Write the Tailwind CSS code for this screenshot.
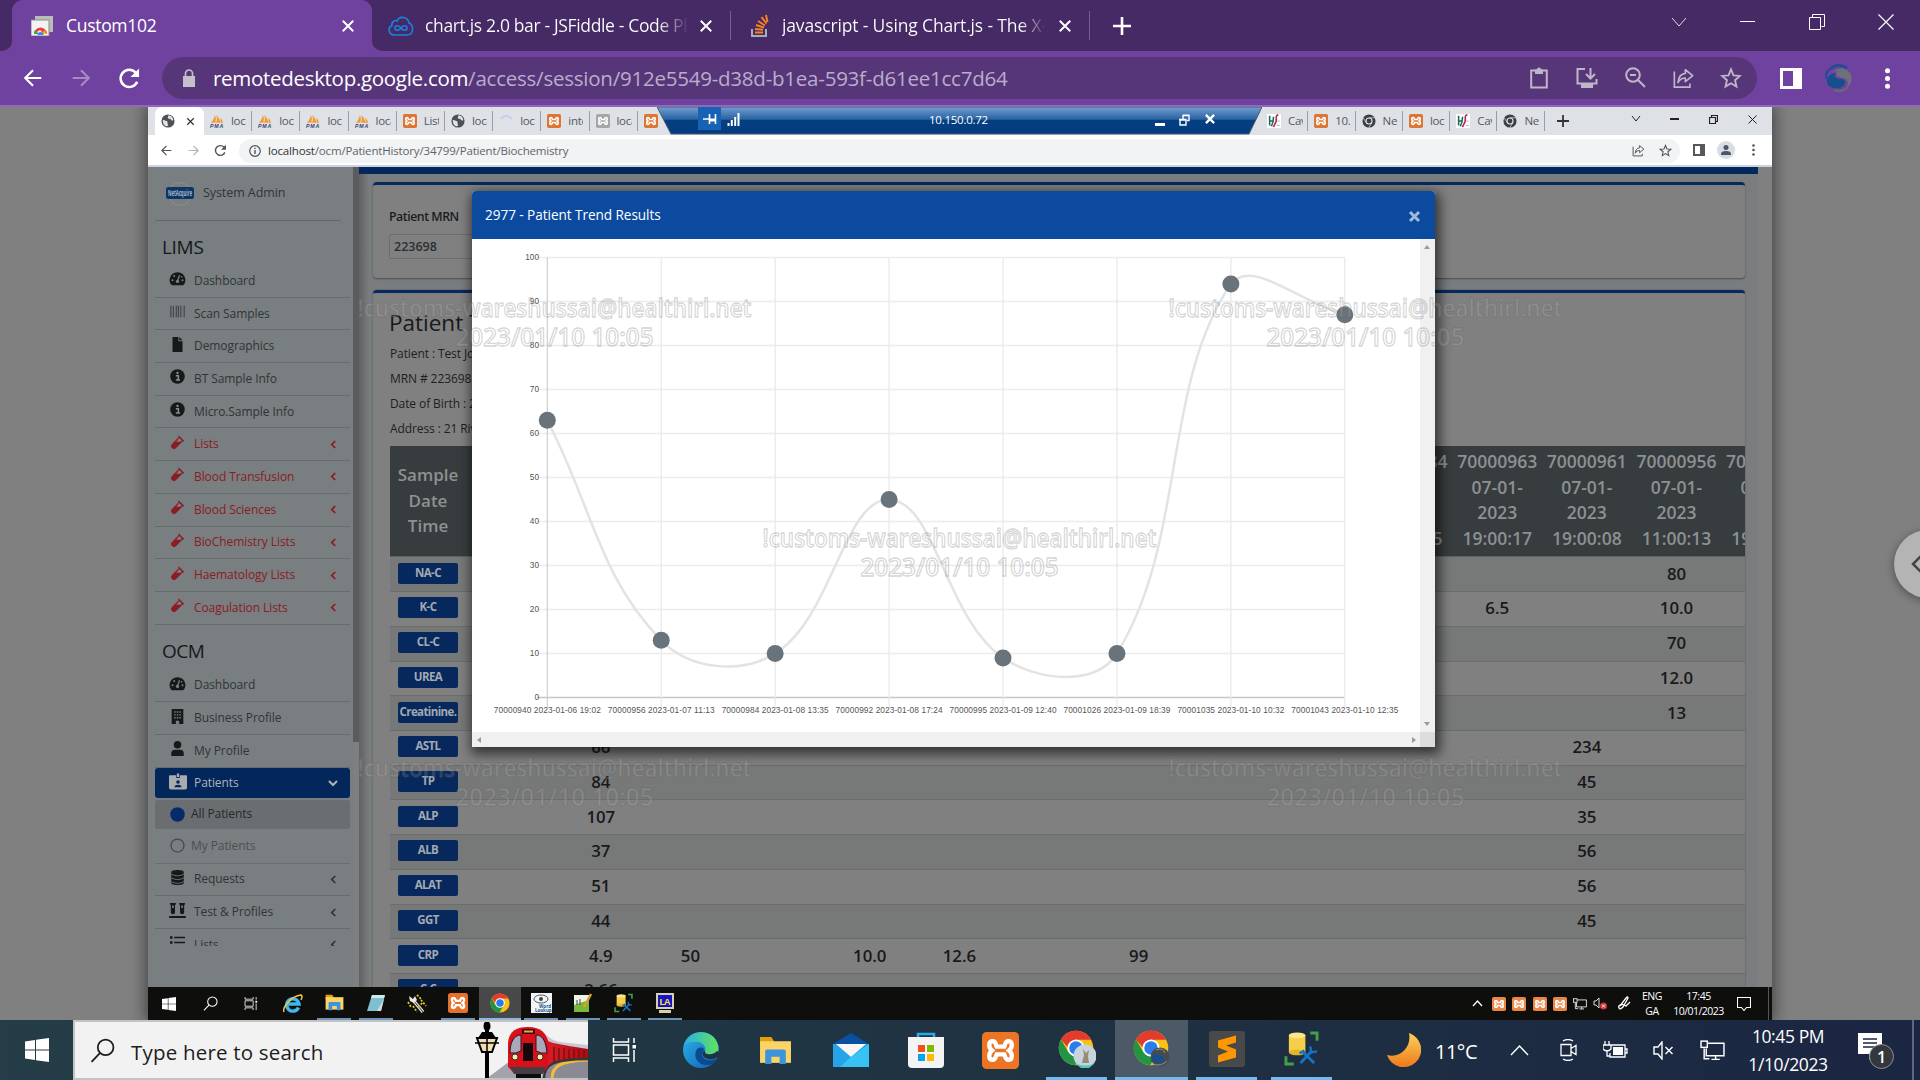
<!DOCTYPE html>
<html lang="en">
<head>
<meta charset="utf-8">
<title>Custom102</title>
<script src="https://cdn.jsdelivr.net/npm/@tailwindcss/browser@4"></script>
</head>
<body class="w-[1920px] h-[1080px] overflow-hidden bg-[#808080] font-['Open_Sans',sans-serif]">
<svg class="absolute w-0 h-0">
  <defs>
    <linearGradient id="gEdge" x1="0" y1="0" x2="1" y2="1"><stop offset="0" stop-color="#2cb4e8"/><stop offset="1" stop-color="#0f5fb5"/></linearGradient>
    <linearGradient id="gEdge2" x1="0" y1="0" x2="1" y2="0"><stop offset="0" stop-color="#27b1e6"/><stop offset="1" stop-color="#62e25c"/></linearGradient>
    <linearGradient id="gMoon" x1="0" y1="0" x2="0" y2="1"><stop offset="0" stop-color="#fbd25a"/><stop offset="1" stop-color="#ee7a1b"/></linearGradient>
    <linearGradient id="gCurve" x1="0" y1="0" x2="1" y2="0"><stop offset="0" stop-color="#e8232c"/><stop offset="1" stop-color="#a60d14"/></linearGradient>
  </defs>
  <symbol id="close" viewBox="0 0 24 24"><path d="M5 5l14 14M19 5L5 19" stroke="currentColor" stroke-width="2.6" fill="none"/></symbol>
  <symbol id="back" viewBox="0 0 24 24"><path d="M21 12H4M12 3.5L3.5 12l8.500 8.500" stroke="currentColor" stroke-width="2.300" fill="none"/></symbol>
  <symbol id="fwd" viewBox="0 0 24 24"><path d="M3 12h17M12 3.500l8.500 8.500-8.500 8.500" stroke="currentColor" stroke-width="2.300" fill="none"/></symbol>
  <symbol id="reload" viewBox="0 0 24 24"><path d="M20 15.500A9 9 0 1 1 18.500 6" stroke="currentColor" stroke-width="2.600" fill="none"/><path d="M22 1.500v9h-9z" fill="currentColor"/></symbol>
  <symbol id="star" viewBox="0 0 24 24"><path d="M12 2.500l2.700 6.600 7.100.6-5.400 4.700 1.600 7-6-3.700-6 3.700 1.600-7-5.400-4.700 7.100-.6z" stroke="currentColor" stroke-width="2" fill="none"/></symbol>
  <symbol id="share" viewBox="0 0 24 24"><path d="M2 5v17h17v-4" stroke="currentColor" stroke-width="1.800" fill="none"/><path d="M14 3l8 6.500-8 6.500v-4c-4 0-6 1.500-8 5 .5-6 3-9.500 8-10z" stroke="currentColor" stroke-width="1.800" fill="none" stroke-linejoin="round"/></symbol>
  <symbol id="globe" viewBox="0 0 16 16"><circle cx="8" cy="8" r="7.500" fill="#4d5156"/><path d="M2 7c2-1 3 1 4.500 1S7 11 8 12s-1 2-1 2C4 14 2 11 2 7zM8 2c3-1 6 2 6 5-1 1-3 0-3-1s-2 0-3-1 1-2 0-3z" fill="#dfe3e6"/></symbol>
  <symbol id="pma" viewBox="0 0 16 16"><path d="M1 10C3 8 5 5 5.500 1 7 4 7 8 6 10zM7 10c1-3 1-6 .5-9C10 4 12 8 12 10zM12 10c.5-2 .3-4-.3-6 1.500 1.500 3 4 3.300 6z" fill="#f29a2e"/><text x="0" y="15.800" font-size="6" font-weight="700" font-style="italic" fill="#3b4276" font-family="Liberation Sans" textLength="15">PMA</text></symbol>
  <symbol id="xampp" viewBox="0 0 24 24"><rect width="24" height="24" rx="3" fill="currentColor"/><path d="M7 6c-3 0-3 4-.5 6-2.500 2-2.500 6 .5 6 2 0 2-2.500 2.500-3.500h5c.5 1 .5 3.500 2.500 3.500 3 0 3-4 .5-6 2.500-2 2.500-6-.5-6-2 0-2 2.500-2.500 3.500h-5C9 8.500 9 6 7 6z" stroke="#fff" stroke-width="2.800" fill="none"/></symbol>
  <symbol id="chromeg" viewBox="0 0 16 16"><circle cx="8" cy="8" r="7.500" fill="#3c4043"/><circle cx="8" cy="8" r="3.400" fill="#3c4043" stroke="#dfe3e6" stroke-width="1.300"/><path d="M8 4.300h7M4.800 10L1.400 4.300M11.200 10l-3.400 5.600" stroke="#dfe3e6" stroke-width=".8"/></symbol>
  <symbol id="chrome" viewBox="0 0 48 48"><circle cx="24" cy="24" r="23" fill="#fbc116"/><path d="M4 12.500A23 23 0 0 0 23 47l10.500-18L24 34l-10-4z" fill="#229443"/><path d="M4 12.500A23 23 0 0 1 24 1a23 23 0 0 1 20 12H24l-9.500 12z" fill="#e33b2e"/><circle cx="24" cy="24" r="11.500" fill="#fff"/><circle cx="24" cy="24" r="9" fill="#2a7de8"/></symbol>
  <symbol id="hse" viewBox="0 0 16 16"><rect width="16" height="16" fill="#fff"/><path d="M3 2v11M3 8h4M7.500 3c0 3-1 8-2.500 11" stroke="#1f6a5c" stroke-width="1.800" fill="none"/><path d="M13 1c-3.500 0-2 4-2.500 7S8 12 7.500 15" stroke="#b7244c" stroke-width="1.800" fill="none"/><path d="M12 8h2.500M11 13h3.500" stroke="#99aab5"/></symbol>
  <symbol id="win" viewBox="0 0 24 24"><path d="M0 3.400L10 2v9.500H0zM11 1.850L24 0v11.500H11zM0 12.500h10V22L0 20.600zM11 12.500h13V24l-13-1.850z" fill="#fff"/></symbol>
  <symbol id="mag" viewBox="0 0 24 24"><circle cx="15" cy="9" r="7.500" fill="none" stroke="currentColor" stroke-width="1.700"/><path d="M9.500 14.500L1.500 23" stroke="currentColor" stroke-width="1.700"/></symbol>
  <symbol id="tview" viewBox="0 0 24 24"><path d="M1 0v4h15V0M1 24v-4h15v4M1 7h15v10H1zM21.500 0v5M21.500 12v12" fill="none" stroke="#fff" stroke-width="1.500"/><rect x="20" y="7" width="3.500" height="3.500" fill="#fff"/></symbol>
  <symbol id="folder" viewBox="0 0 32 32"><path d="M1 3h11l2 3v4H1z" fill="#e3a008"/><path d="M1 7h30v21H1z" fill="#fbd366"/><path d="M6 29V17q0-2 2-2h16q2 0 2 2v12h-6v-7h-8v7z" fill="#3a95dd"/></symbol>
  <symbol id="dbt" viewBox="0 0 36 36"><path d="M5 4h17v18H5z" fill="#f6cf4a"/><ellipse cx="13.500" cy="4.500" rx="8.500" ry="3" fill="#fde58c"/><ellipse cx="13.500" cy="22" rx="8.500" ry="3" fill="#e7b52c"/><path d="M27 2h7v8M2 26v8h8" stroke="#43a047" stroke-width="3" fill="none"/><path d="M17 33l12-13M19 21l12 12" stroke="#1673c4" stroke-width="3"/><path d="M27 16l1 6 6-1M16 23l5-3" stroke="#1673c4" stroke-width="2.500" fill="none"/></symbol>
  <symbol id="net" viewBox="0 0 24 20"><path d="M7 3h16v12H6V8M11 18.500h8M15 15v3.500M4 8v10h5" fill="none" stroke="currentColor" stroke-width="1.400"/><rect x="1" y="1" width="6" height="6" fill="none" stroke="currentColor" stroke-width="1.400"/></symbol>
  <symbol id="dash" viewBox="0 0 20 18"><path d="M2 16a9.500 9.500 0 1 1 16 0q-.5 1-1.500 1h-13Q2.500 17 2 16z" fill="currentColor"/><path d="M10 12l2.500-7" stroke="#797e80" stroke-width="1.600"/><g fill="#797e80"><circle cx="10" cy="12.500" r="2"/><circle cx="4" cy="11" r="1.200"/><circle cx="6" cy="6" r="1.200"/><circle cx="16" cy="11" r="1.200"/><circle cx="15" cy="7" r="1"/></g></symbol>
  <symbol id="barcode" viewBox="0 0 20 18"><path d="M2 2v14M5 2v14M8.500 2v14M11 2v14M14 2v14M18 2v14" stroke="#3d4143" stroke-width="1.300"/></symbol>
  <symbol id="file" viewBox="0 0 20 18"><path d="M4 0h7v5h5v13H4zM12 0l4 4h-4z" fill="currentColor"/></symbol>
  <symbol id="info" viewBox="0 0 20 18"><circle cx="10" cy="9" r="8.700" fill="currentColor"/><path d="M8 8h3v5M8 13.300h5" stroke="#8a8f91" stroke-width="1.800" fill="none"/><circle cx="10" cy="4.800" r="1.400" fill="#8a8f91"/></symbol>
  <symbol id="vial" viewBox="0 0 20 18"><path d="M11.500.5l6.500 6.500-1 1-.6-.6-8 8.300a3.400 3.400 0 0 1-5-5L11.500 2.500 10.600 1.500z" fill="currentColor"/><path d="M8.500 8h5l1.600-1.600L11.900 3.600z" fill="#797e80"/></symbol>
  <symbol id="bldg" viewBox="0 0 20 18"><path d="M3 0h14v18h-5v-4H8v4H3z" fill="currentColor"/><path d="M6 3.500h8M6 7h8M6 10.500h8" stroke="#797e80" stroke-width="1.700" stroke-dasharray="1.800 1.300"/></symbol>
  <symbol id="user" viewBox="0 0 20 18"><circle cx="10" cy="4.500" r="4.500" fill="currentColor"/><path d="M2.500 18v-3q0-4.500 4.500-4.500h6q4.500 0 4.500 4.500v3z" fill="currentColor"/></symbol>
  <symbol id="idb" viewBox="0 0 20 18"><path d="M0 3q0-1 1-1h7v3h4V2h7q1 0 1 1v13q0 2-2 2H2q-2 0-2-2zM8.700 0h2.600v4H8.700z" fill="#a9acae"/><circle cx="10" cy="9.500" r="2" fill="#03275a"/><path d="M6 15.500q0-3 4-3t4 3z" fill="#03275a"/></symbol>
  <symbol id="dot" viewBox="0 0 20 18"><circle cx="10" cy="9" r="8.700" fill="#062b68"/></symbol>
  <symbol id="ring" viewBox="0 0 20 18"><circle cx="10" cy="9" r="7.800" fill="none" stroke="#45494b" stroke-width="1.500"/></symbol>
  <symbol id="db" viewBox="0 0 20 18"><path d="M2.500 2.500C2.500-.7 17.500-.7 17.500 2.500v13c0 3.300-15 3.300-15 0z" fill="currentColor"/><path d="M2.500 5q7.500 4 15 0M2.500 9.500q7.500 4 15 0M2.500 14q7.500 4 15 0" stroke="#797e80" stroke-width="1" fill="none"/></symbol>
  <symbol id="vials" viewBox="0 0 20 18"><path d="M1 0h7v2H7v9a2.500 2.500 0 0 1-5 0V2H1zM12 0h7v2h-1v9a2.500 2.500 0 0 1-5 0V2h-1zM0 15.500h20V18H0z" fill="currentColor"/><path d="M3.500 3h2v3h-2zM14.500 3h2v3h-2z" fill="#797e80"/></symbol>
  <symbol id="list" viewBox="0 0 20 18"><path d="M6 3h13M6 9h13M6 15h13" stroke="currentColor" stroke-width="1.900"/><path d="M1 3h3M1 9h3M1 15h3" stroke="currentColor" stroke-width="3"/></symbol>
  <symbol id="chl" viewBox="0 0 8 10"><path d="M6 1L2 5l4 4" stroke="currentColor" stroke-width="2" fill="none"/></symbol>
</svg>

<div class="relative flex flex-col w-[1920px] h-[1080px]">
  <!-- browser tab strip -->
  <div class="h-[51px] bg-[#462a65] flex text-white text-[17.5px] tracking-[-0.2px]">
    <div class="w-3 bg-[#6f42a0]"><div class="h-full bg-[#462a65] rounded-br-[10px]"></div></div>
    <div class="w-[360px] h-full bg-[#6f42a0] rounded-t-[11px] flex items-center pl-[19px] pr-[15px]">
      <svg class="w-[22px] h-[20px]" viewBox="0 0 22 20"><path d="M4 0h18v16h-4V4H4z" fill="#b9bdb5"/><path d="M0 4h18v16H0z" fill="#f2f2f2" stroke="#8c8c8c"/><path d="M3 18a6.500 6.500 0 0 1 13 0h-3L9 14z" fill="#ea4335"/><path d="M3 18a6 6 0 0 1 1-4l4 4z" fill="#34a853"/><path d="M12 18l1-4 3 4z" fill="#fbbc05"/><path d="M6.500 19a3 3 0 0 1 6 0z" fill="#4285f4"/></svg>
      <span class="ml-[13px] flex-1 -mt-px tracking-[-0.3px]">Custom102</span>
      <svg class="w-[18px] h-[18px]"><use href="#close"/></svg>
    </div>
    <div class="w-[12px] bg-[#6f42a0]"><div class="h-full bg-[#462a65] rounded-bl-[10px]"></div></div>
    <div class="w-[346px] flex items-center pl-[4px]">
      <svg class="w-[26px] h-[20px]" viewBox="0 0 26 20" fill="none" stroke="#1a83dd" stroke-width="1.600"><path d="M6 19a5 5 0 0 1-2-9.500C3 5 8 4 9 5c3-6 11-4 12 2 5 2 5 12-2 12z"/><path d="M13 12c-2-3-6-3-6 0s4 3 6 0 6-3 6 0-4 3-6 0z"/></svg>
      <span class="ml-[11px] w-[264px] overflow-hidden whitespace-nowrap -mt-px bg-linear-to-r from-white from-88% to-transparent bg-clip-text text-transparent tracking-[-0.35px]">chart.js 2.0 bar - JSFiddle - Code Playground</span>
      <svg class="w-[18px] h-[18px] ml-[8px]"><use href="#close"/></svg>
    </div>
    <div class="w-[359px] flex items-center relative">
      <div class="w-px h-[29px] bg-[#765f90]"></div>
      <svg class="w-[18px] h-[24px] ml-[20px]" viewBox="0 0 18 24"><path d="M1 15v7h14v-7" fill="none" stroke="#a9aeb3" stroke-width="2"/><path d="M4 18.500h8M4 15l8 .8M5 11l8 2.500M7 7l7 4.500M10.500 3l5 6.500M15 1l1.500 7" stroke="#f48024" stroke-width="2"/></svg>
      <span class="ml-[13px] w-[264px] overflow-hidden whitespace-nowrap -mt-px bg-linear-to-r from-white from-90% to-transparent bg-clip-text text-transparent tracking-[-0.15px]">javascript - Using Chart.js - The X-axis</span>
      <svg class="w-[18px] h-[18px] ml-[10px]"><use href="#close"/></svg>
    </div>
    <div class="w-[60px] flex items-center">
      <div class="w-px h-[29px] bg-[#765f90]"></div>
      <svg class="w-[18px] h-[18px] ml-[23px]" viewBox="0 0 18 18"><path d="M9 0v18M0 9h18" stroke="#fff" stroke-width="2.600"/></svg>
    </div>
    <div class="ml-auto h-[43px] flex">
      <div class="w-[68px] flex items-center justify-center"><svg class="w-[16px] h-[10px]" viewBox="0 0 16 10"><path d="M1 1l7 8 7-8" stroke="#ddd" fill="none"/></svg></div>
      <div class="w-[69px] flex items-center justify-center"><div class="w-[15px] h-px bg-white"></div></div>
      <div class="w-[69px] flex items-center justify-center"><svg class="w-[16px] h-[16px]" viewBox="0 0 16 16"><path d="M.5 3.500h11v12H.5zM3.500 3V.5h12v12h-3" stroke="#fff" fill="none"/></svg></div>
      <div class="w-[69px] flex items-center justify-center"><svg class="w-[16px] h-[16px]" viewBox="0 0 16 16"><path d="M.5.5l15 15M15.500.5l-15 15" stroke="#fff" stroke-width="1.200"/></svg></div>
    </div>
  </div>

  <!-- browser address bar -->
  <div class="h-[56px] bg-[#6f42a0] border-b-2 border-[#8f68bb] flex items-center pl-[9px] text-white">
    <div class="w-12 flex justify-center"><svg class="w-[22px] h-[22px]"><use href="#back"/></svg></div>
    <div class="w-12 flex justify-center text-[#a78ac6]"><svg class="w-[22px] h-[22px]"><use href="#fwd"/></svg></div>
    <div class="w-12 flex justify-center"><svg class="w-[23px] h-[23px]"><use href="#reload"/></svg></div>
    <div class="ml-[9px] w-[1595px] h-[42px] rounded-full bg-[#563679] flex items-center pl-[20px] text-[#c0b6ca]">
      <svg class="w-[14px] h-[18px]" viewBox="0 0 14 18"><path d="M1 7h12v11H1z" fill="#c4bfca"/><path d="M3.500 8V4.500a3.500 3.500 0 0 1 7 0V8" stroke="#c4bfca" stroke-width="1.700" fill="none"/></svg>
      <span class="ml-[17px] text-[20.500px] whitespace-nowrap tracking-[-0.23px] text-[#bcaccb]"><span class="text-white tracking-[-0.3px]">remotedesktop.google.com</span>/access/session/912e5549-d38d-b1ea-593f-d61ee1cc7d64</span>
      <div class="ml-auto mr-[2px] flex">
        <div class="w-12 flex justify-center"><svg class="w-[18px] h-[22px]" viewBox="0 0 18 22"><path d="M1.200 3.500h15.600v17H1.200z" fill="none" stroke="currentColor" stroke-width="2"/><path d="M5 2.500h2a2 2 0 0 1 4 0h2V7H5z" fill="currentColor"/></svg></div>
        <div class="w-12 flex justify-center"><svg class="w-[22px] h-[22px]" viewBox="0 0 22 22"><path d="M9 2H1.500v14.500h19V12" fill="none" stroke="currentColor" stroke-width="2"/><path d="M14.500 1v9M10 7l4.500 4.500L19 7" stroke="currentColor" stroke-width="2" fill="none"/><path d="M5 17h12v4H5z" fill="currentColor"/></svg></div>
        <div class="w-12 flex justify-center"><svg class="w-[21px] h-[21px]" viewBox="0 0 21 21"><circle cx="8" cy="8" r="6.800" fill="none" stroke="currentColor" stroke-width="2"/><path d="M13 13l7 7M5 8h6" stroke="currentColor" stroke-width="2"/></svg></div>
        <div class="w-12 flex justify-center"><svg class="w-[23px] h-[22px]"><use href="#share"/></svg></div>
        <div class="w-12 flex justify-center"><svg class="w-[22px] h-[22px]"><use href="#star"/></svg></div>
      </div>
    </div>
    <div class="w-12 ml-[10px] flex justify-center"><div class="w-[22px] h-[21px] border-[3px] border-r-[9px] border-white"></div></div>
    <div class="w-12 flex justify-center"><svg class="w-[28px] h-[28px]" viewBox="0 0 28 28" fill="none"><path d="M7 9c4-6 14-6 18 0 4 7 0 13-4 15 3-5 2-9-3-10-7-1-9-4-5-7-3 0-5 1-6 2z" fill="#6d7278"/><path d="M12 9c-6 0-11 4-10 10 3 7 16 7 18 0 0-4-3-4-6-4-5-1-6-4-2-6z" fill="#144f8e"/><path d="M5 5Q13-2 22 4" stroke="#1b4f8f" stroke-width="2.500"/><path d="M1.500 15Q0 8 5 5" stroke="#1b4f8f" stroke-width="2"/><path d="M9 26q8 3 14-3" stroke="#666c74" stroke-width="2"/></svg></div>
    <div class="w-12 flex justify-center"><svg class="w-[5px] h-[21px]" viewBox="0 0 5 21" fill="#fff"><circle cx="2.500" cy="2.700" r="2.500"/><circle cx="2.500" cy="10.500" r="2.500"/><circle cx="2.500" cy="18.300" r="2.500"/></svg></div>
  </div>

  <!-- remote session viewport -->
  <div class="h-[913px] bg-[#808080] flex justify-center overflow-hidden relative">
    <div class="w-[1624px] h-[913px] flex flex-col shadow-[0_0_14px_3px_rgba(0,0,0,0.45)] relative overflow-hidden">
      <!-- inner tab strip -->
      <div class="h-[28px] bg-[#dee1e6] flex items-center text-[11.5px] text-[#55595d] tracking-[-0.3px] relative">
        <div class="ml-[7px] w-[49px] h-full rounded-t-[7px] bg-white flex items-center pl-[6px] gap-[10px] text-[#333]"><svg class="w-[14px] h-[14px]"><use href="#globe"/></svg><svg class="w-[11px] h-[11px]"><use href="#close"/></svg></div>
        <div id="tabsL" class="flex h-full items-center w-[460px] overflow-hidden"></div>
        <div id="tabsR" class="flex h-full items-center ml-[597px]"></div>
        <svg class="w-[12px] h-[12px] ml-[12px] text-[#333]" viewBox="0 0 12 12"><path d="M6 0v12M0 6h12" stroke="currentColor" stroke-width="1.800"/></svg>
        <div class="ml-auto flex text-[#222] -mt-1">
          <div class="w-[39px] flex justify-center"><svg class="w-[10px] h-[7px]" viewBox="0 0 10 7"><path d="M1 1l4 5 4-5" stroke="currentColor" fill="none"/></svg></div>
          <div class="w-[39px] flex justify-center items-center"><div class="w-[9px] h-[1.500px] bg-[#222]"></div></div>
          <div class="w-[39px] flex justify-center"><svg class="w-[9px] h-[9px]" viewBox="0 0 9 9"><path d="M.5 2.500h6v6h-6zM2.500 2V.5h6v6h-2" stroke="currentColor" fill="none" stroke-width="1.200"/></svg></div>
          <div class="w-[39px] flex justify-center"><svg class="w-[9px] h-[9px]" viewBox="0 0 9 9"><path d="M.5.5l8 8M8.500.5l-8 8" stroke="currentColor"/></svg></div>
        </div>
        <!-- connection bar laid over the tabs -->
        <div class="absolute left-[509px] top-0 w-[605px] h-[28px]">
          <svg class="absolute inset-0" width="605" height="28"><defs><linearGradient id="gb" x1="0" y1="0" x2="0" y2="1"><stop offset="0" stop-color="#719fd0"/><stop offset=".45" stop-color="#2a62a3"/><stop offset=".5" stop-color="#03407f"/><stop offset="1" stop-color="#053a83"/></linearGradient></defs><path d="M0 0h605l-13 27H14z" fill="url(#gb)" stroke="#4a5a68"/></svg>
          <div class="relative flex items-center h-[26px] text-white">
            <div class="ml-[41px] w-[23px] h-[23px] -mt-[3px] bg-[#1762b5] flex items-center justify-center"><svg class="w-[14px] h-[10px]" viewBox="0 0 14 10"><path d="M0 5h6M6.500 0v10M12.500 0v10" stroke="#fff" stroke-width="1.600"/><path d="M7 4.500h6v3H7z" fill="#fff"/></svg></div>
            <svg class="ml-[6px] w-[13px] h-[13px] -mt-[2px]" viewBox="0 0 13 13"><path d="M1.500 10v3M4.800 7v6M8.200 4v9M11.500 0v13" stroke="#fff" stroke-width="2"/></svg>
            <span class="ml-[189px] text-[11.500px] tracking-[-0.25px]">10.150.0.72</span>
            <div class="ml-[167px] mt-[8px] w-[10px] h-[3px] bg-white"></div>
            <svg class="ml-[14px] w-[11px] h-[12px] -mt-px" viewBox="0 0 11 12"><path d="M1 6h6v5H1zM4 5V1.500h6v5H8M0 5.500h7.500M4 1.200h6.500" stroke="#fff" stroke-width="1.400" fill="none"/></svg>
            <svg class="ml-[13px] w-[14px] h-[14px] -mt-[2px]" viewBox="0 0 24 24"><path d="M5 5l14 14M19 5L5 19" stroke="#fff" stroke-width="4"/></svg>
          </div>
        </div>
      </div>
      <!-- inner address bar -->
      <div class="h-[32px] bg-white border-b-2 border-[#c9d3e2] flex items-center text-[#50555a]">
        <div class="ml-[5px] w-[27px] flex justify-center"><svg class="w-[13px] h-[13px]"><use href="#back"/></svg></div>
        <div class="w-[27px] flex justify-center text-[#b3b6b8]"><svg class="w-[13px] h-[13px]"><use href="#fwd"/></svg></div>
        <div class="w-[27px] flex justify-center"><svg class="w-[13px] h-[13px]"><use href="#reload"/></svg></div>
        <div class="ml-[5px] w-[1441px] h-[24px] rounded-full bg-[#f1f3f4] flex items-center pl-[10px] pr-[8px] mt-px">
          <svg class="w-[12px] h-[12px]" viewBox="0 0 12 12"><circle cx="6" cy="6" r="5.300" fill="none" stroke="currentColor" stroke-width="1.200"/><path d="M6 5v4M6 2.700v1.400" stroke="currentColor" stroke-width="1.400"/></svg>
          <span class="ml-[7px] text-[11.500px] tracking-[-0.16px] text-[#5f6368]"><span class="text-[#303438]">localhost</span>/ocm/PatientHistory/34799/Patient/Biochemistry</span>
          <svg class="ml-auto w-[13px] h-[13px]"><use href="#share"/></svg>
          <svg class="ml-[14px] w-[13px] h-[13px]"><use href="#star"/></svg>
        </div>
        <div class="ml-[13px] w-[12px] h-[12px] border-2 border-r-[5px] border-[#55595d]"></div>
        <svg class="ml-[12px] w-[18px] h-[18px]" viewBox="0 0 18 18"><circle cx="9" cy="9" r="9" fill="#d9dde3"/><circle cx="9" cy="6.500" r="2.500" fill="#4b5667"/><path d="M4 13q0-3 5-3t5 3v1H4z" fill="#4b5667"/></svg>
        <svg class="ml-[17px] w-[3px] h-[12px]" viewBox="0 0 3 12" fill="#50555a"><circle cx="1.500" cy="1.500" r="1.300"/><circle cx="1.500" cy="6" r="1.300"/><circle cx="1.500" cy="10.500" r="1.300"/></svg>
      </div>

      <!-- web application, dimmed behind the dialog -->
      <div class="h-[820px] flex overflow-hidden bg-[#7a7d7f]">
        <aside class="w-[205px] bg-[#797e80] text-[12px] tracking-[-0.08px] text-[#303537] overflow-hidden">
          <div class="h-[54px] mx-[7px] mr-[12px] border-b border-[#62686b] flex items-center pl-[11px]">
            <svg class="w-[28px] h-[26px]" viewBox="0 0 28 26"><circle cx="14" cy="13" r="11.500" fill="none" stroke="#9a8f8c" stroke-width=".8"/><rect y="6" width="28" height="12" rx="2.500" fill="#0a3768"/><text x="2" y="15.200" font-size="8" font-weight="700" fill="#a9b4c0" textLength="24" lengthAdjust="spacingAndGlyphs">NetAcquire</text></svg>
            <span class="ml-[9px] text-[12.500px]">System Admin</span>
          </div>
          <div class="h-[44px] pl-[14px] flex items-center pt-[8px] text-[19px] text-[#15191b] tracking-[-0.3px]">LIMS</div>
          <div id="lims"></div>
          <div class="h-[45px] pl-[14px] flex items-center pt-[8px] text-[19px] text-[#15191b] tracking-[-0.5px]">OCM</div>
          <div id="ocm"></div>
          <div class="mx-[7px] mr-[3px] h-[30px] rounded-[3px] bg-[#03275a] text-[#aeb4ba] flex items-center pl-[14px]"><svg class="w-[18px] h-[17px] -mt-[3px]"><use href="#idb"/></svg><span class="ml-[7px]">Patients</span><svg class="w-[8px] h-[10px] ml-auto mr-[13px] -rotate-90"><use href="#chl"/></svg></div>
          <div class="mx-[7px] mr-[3px] mt-[2px] h-[29px] rounded-[3px] bg-[#6b6e70] flex items-center pl-[14px] text-[#25292b]"><svg class="w-[17px] h-[15px]"><use href="#dot"/></svg><span class="ml-[5px]">All Patients</span></div>
          <div class="mx-[7px] mr-[3px] h-[35px] border-b border-[#696e71] flex items-center pl-[14px] text-[#4c5053]"><svg class="w-[17px] h-[15px]"><use href="#ring"/></svg><span class="ml-[5px]">My Patients</span></div>
          <div id="tail" class="h-[82px] overflow-hidden"></div>
        </aside>
        <div class="w-[6px] bg-[#7e8080]"><div class="h-[575px] bg-[#5b5c5c]"></div></div>
        <main class="w-[1399px] h-full flex flex-col bg-linear-to-r from-[#5e6263] to-[#7a7d7f] to-[10px]">
          <div class="h-[7px] shrink-0 bg-[#04285b]"></div>
          <section class="mt-[8px] ml-[14px] w-[1372px] h-[96px] shrink-0 rounded-[4px] border-t-[3px] border-[#06295e] bg-[#808080] shadow-[0_1px_2px_rgba(0,0,0,0.4)] pl-[16px] pt-[22px]">
            <div class="text-[12.300px] leading-[20px] font-semibold text-[#1a1d20] tracking-[-0.45px]">Patient MRN</div>
            <div class="mt-[7px] w-[300px] h-[25px] border border-[#6b6e71] rounded-[2px] pl-[4px] text-[12.500px] leading-[23px] font-semibold text-[#2b2f33]">223698</div>
          </section>
          <section class="mt-[12px] ml-[14px] w-[1372px] flex-1 rounded-t-[4px] border-t-[3px] border-[#06295e] bg-[#808080] shadow-[0_0_2px_rgba(0,0,0,0.4)] pl-[17px] overflow-hidden">
            <h1 class="mt-[11px] h-[38px] leading-[38px] text-[22.500px] text-[#17191b] -ml-px">Patient Trend</h1>
            <div class="text-[12px] leading-[25.100px] text-[#1d2023] tracking-[-0.1px] mt-[-1px]">
              <div>Patient : Test Jones</div><div>MRN # 223698</div><div>Date of Birth : 21-03-1980</div><div>Address : 21 River Road</div>
            </div>
            <div class="mt-[5px] h-[111px] w-[1355px] flex overflow-hidden bg-[#373c3e] text-[#8e9192] text-[17.500px] font-semibold leading-[25.500px] text-center border-b border-[#5f6364]">
              <div class="w-[76px] pt-[16px] shrink-0 text-[17px]">Sample Date Time</div><div class="w-[90px] shrink-0"></div>
              <div id="thead" class="flex pt-[3px]"></div>
            </div>
            <div id="tbody"></div>
          </section>
        </main>
        <div class="w-[14px] bg-[#808080]"></div>
      </div>

      <!-- inner taskbar -->
      <div class="h-[33px] bg-[#0e0e0d] flex items-center text-white shrink-0">
        <div class="w-[41.400px] flex justify-center"><svg class="w-[14px] h-[14px]"><use href="#win"/></svg></div>
        <div class="w-[41.400px] flex justify-center"><svg class="w-[15px] h-[15px]"><use href="#mag"/></svg></div>
        <div class="w-[41.400px] flex justify-center"><svg class="w-[14px] h-[13px]"><use href="#tview"/></svg></div>
        <div class="w-[41.400px] flex justify-center"><svg class="w-[20px] h-[20px]" viewBox="0 0 20 20"><path d="M15.500 13.500A6.200 6.200 0 1 1 16 10H5" fill="none" stroke="#3db9ef" stroke-width="3.400"/><path d="M1 18C-1 14 8 2 18 1q2 1 0 5" fill="none" stroke="#f4c443" stroke-width="1.500"/></svg></div>
        <div class="w-[41.400px] h-full flex justify-center items-center"><div class="w-[34px] h-full border-b-2 border-[#6f93b8] flex justify-center items-center"><svg class="w-[19px] h-[19px]"><use href="#folder"/></svg></div></div>
        <div class="w-[41.400px] h-full flex justify-center items-center"><div class="w-[34px] h-full border-b-2 border-[#6f93b8] flex justify-center items-center"><svg class="w-[18px] h-[18px]" viewBox="0 0 18 18"><path d="M5 1h13l-4 16H0z" fill="#7fc0cf"/><path d="M5 1h13l-1 3H4z" fill="#cfe9ee"/><path d="M10 17l7-12-3 12z" fill="#d8dcdf"/></svg></div></div>
        <div class="w-[41.400px] flex justify-center"><svg class="w-[20px] h-[20px]" viewBox="0 0 20 20"><path d="M6 6l10 12" stroke="#d9d9d2" stroke-width="3.500"/><path d="M6 6l10 12" stroke="#333" stroke-width="1"/><path d="M2 2l1 5 4 2 3-3-2-4-2 3z" fill="#e8e8e0"/><path d="M1 8l3 5M10 1l4 4M14 6l5 6M6 12l4 6M15 9l-4 5" stroke="#e4c81e" stroke-width="1.800" stroke-dasharray="2 1.500"/></svg></div>
        <div class="w-[41.400px] h-full flex justify-center items-center"><div class="w-[34px] h-full border-b-2 border-[#6f93b8] flex justify-center items-center text-[#e5722c]"><svg class="w-[20px] h-[20px]"><use href="#xampp"/></svg></div></div>
        <div class="w-[41.400px] h-full flex justify-center items-center bg-[#474847] border-b-2 border-[#8fb5dc]"><svg class="w-[20px] h-[20px]"><use href="#chrome"/></svg></div>
        <div class="w-[41.400px] h-full flex justify-center items-center"><div class="w-[34px] h-full border-b-2 border-[#6f93b8] flex justify-center items-center"><svg class="w-[21px] h-[20px]" viewBox="0 0 21 20"><path d="M0 0h21v20H0z" fill="#f3f6f8"/><ellipse cx="10" cy="6" rx="7" ry="4" fill="none" stroke="#555"/><circle cx="10" cy="6" r="2" fill="#444"/><text x="8" y="14.500" font-size="4.500" font-weight="700" fill="#23568a">Word</text><text x="4" y="19" font-size="4.500" font-weight="700" fill="#23568a">Lookup</text></svg></div></div>
        <div class="w-[41.400px] h-full flex justify-center items-center"><div class="w-[34px] h-full border-b-2 border-[#6f93b8] flex justify-center items-center"><svg class="w-[19px] h-[20px]" viewBox="0 0 19 20"><path d="M1 2h15v17H1z" fill="#eef3ea"/><path d="M1 12l15-5v12H1z" fill="#78b83a"/><path d="M4 7v5M7 6v6" stroke="#444"/><path d="M18 1l-7 13" stroke="#dca12d" stroke-width="2.500"/></svg></div></div>
        <div class="w-[41.400px] h-full flex justify-center items-center"><div class="w-[34px] h-full border-b-2 border-[#6f93b8] flex justify-center items-center"><svg class="w-[19px] h-[20px]"><use href="#dbt"/></svg></div></div>
        <div class="w-[41.400px] h-full flex justify-center items-center"><div class="w-[34px] h-full border-b-2 border-[#6f93b8] flex justify-center items-center"><svg class="w-[20px] h-[20px]" viewBox="0 0 20 20"><path d="M1 0h18v16H1zM4 17h12v3H4z" fill="#d6d0ae"/><path d="M3 2h14v12H3z" fill="#1414c8"/><text x="4.500" y="12" font-size="9.500" font-weight="700" fill="#ffe21a" textLength="11" font-family="Liberation Sans">LA</text></svg></div></div>
        <div class="ml-auto flex items-center h-full">
          <svg class="w-[11px] h-[7px] mr-[9px]" viewBox="0 0 11 7"><path d="M1 6l4.500-5L10 6" stroke="#fff" fill="none" stroke-width="1.300"/></svg>
          <div class="flex gap-[6.300px] text-[#ea8646]"><svg class="w-[14px] h-[14px]"><use href="#xampp"/></svg><svg class="w-[14px] h-[14px]"><use href="#xampp"/></svg><svg class="w-[14px] h-[14px]"><use href="#xampp"/></svg><svg class="w-[14px] h-[14px]"><use href="#xampp"/></svg></div>
          <svg class="ml-[6px] w-[14px] h-[12px]"><use href="#net"/></svg>
          <svg class="ml-[6px] w-[14px] h-[13px]" viewBox="0 0 14 13"><path d="M1 4h2l3-3v10L3 8H1z" fill="none" stroke="#ddd"/><circle cx="10.500" cy="9" r="3.500" fill="#d3303b"/><path d="M9 7.500l3 3M12 7.500l-3 3" stroke="#fff"/></svg>
          <svg class="ml-[10px] w-[14px] h-[15px]" viewBox="0 0 14 15"><path d="M3 10L9 2q2-2 2 0L6 11q-3 3-4 1t1-3q4-1 6 1l4-4" fill="none" stroke="#fff" stroke-width="1.300"/></svg>
          <div class="ml-[10px] w-[22px] text-[10.500px] leading-[15px] text-center tracking-[-0.4px]">ENG<br>GA</div>
          <div class="ml-[10px] w-[51px] text-[10.500px] leading-[15px] text-center tracking-[-0.5px]">17:45<br>10/01/2023</div>
          <svg class="ml-[13px] w-[14px] h-[14px] mr-[17px]" viewBox="0 0 14 14"><path d="M.5.500h13v10h-4l-2.500 3-2.500-3h-4z" fill="none" stroke="#fff" stroke-width="1.100"/></svg>
          <div class="w-px h-full bg-[#555] mr-[3px]"></div>
        </div>
      </div>

      <!-- dialog -->
      <div class="absolute left-[324px] top-[84px] w-[962.500px] h-[556px] bg-white rounded-t-[4px] overflow-hidden shadow-[2px_4px_12px_3px_rgba(0,0,0,0.6)] flex flex-col">
        <div class="h-[48px] bg-[#0b4a9e] flex items-center justify-between pl-[13px] pr-[14px] text-white"><span class="text-[13.600px] tracking-[-0.06px]">2977 - Patient Trend Results</span><svg class="w-[13px] h-[13px] mt-[3px] text-[#9db9dc]" viewBox="0 0 13 13"><path d="M2 2l9 9M11 2l-9 9" stroke="currentColor" stroke-width="3"/></svg></div>
        <div class="flex h-[493px]">
          <svg id="chart" class="w-[948px] h-[493px] shrink-0" viewBox="0 0 948 493" font-family="Liberation Sans" font-size="8.300" fill="#555"></svg>
          <div class="w-[15px] bg-[#f0f0f0] flex flex-col justify-between items-center py-[6px]"><svg class="w-[6px] h-[4px]"><path d="M0 4l3-4 3 4z" fill="#999"/></svg><svg class="w-[6px] h-[4px]"><path d="M0 0l3 4 3-4z" fill="#999"/></svg></div>
        </div>
        <div class="h-[15px] bg-[#f0f0f0] flex justify-between items-center pl-[5px]"><svg class="w-[4px] h-[6px]"><path d="M4 0L0 3l4 3z" fill="#999"/></svg><div class="flex h-full items-center gap-[4px]"><svg class="w-[4px] h-[6px]"><path d="M0 0l4 3-4 3z" fill="#999"/></svg><div class="w-[15px] h-full bg-[#dcdcdc]"></div></div></div>
      </div>

      <!-- session watermark -->
      <svg id="wm" class="absolute left-0 top-0 w-[1624px] h-[880px]" font-family="Open Sans" font-size="24.500" font-weight="600" text-anchor="middle" fill="#fff" fill-opacity=".14" stroke="#606060" stroke-opacity=".27" stroke-width="1.300"></svg>
    </div>
    <!-- session options handle -->
    <div class="absolute left-[1894px] top-[423px] w-[68px] h-[68px] rounded-full bg-[#b4b4b4] shadow-[0_2px_10px_rgba(0,0,0,0.4)] flex items-center pl-[16px]"><svg class="w-[14px] h-[20px]" viewBox="0 0 14 20"><path d="M12 1L3 10l9 9" stroke="#444" stroke-width="2.500" fill="none"/></svg></div>
  </div>

  <!-- host taskbar -->
  <div class="h-[60px] bg-linear-to-r from-[#243d47] via-[#1f3342] to-[#1b2642] flex items-center text-white">
    <div class="w-[73px] shrink-0 flex justify-center"><svg class="w-[24px] h-[24px]"><use href="#win"/></svg></div>
    <div class="w-[515px] shrink-0 h-[60px] bg-[#f2f2f2] border-2 border-[#c3c3c3] border-r-0 flex items-center text-[#1d1d1d] pl-[15px] overflow-hidden">
      <svg class="w-[25px] h-[25px]"><use href="#mag"/></svg>
      <span class="ml-[16px] text-[20.500px] mt-[4px] tracking-[0.2px]">Type here to search</span>
      <svg class="ml-auto w-[116px] h-[58px]" viewBox="0 0 116 58">
        <path d="M14 58L46 34v24z" fill="#a4a2ad"/><path d="M44 46h18v12H44z" fill="#111"/>
        <path d="M52 8C66 2 76 20 88 21l28 3v34H60z" fill="#c9c7d6"/>
        <path d="M62 8C70 22 80 22 116 28v12c-24-1-30 4-44 8z" fill="url(#gCurve)"/>
        <path d="M82 26v17M87 27v14M92 27v13M97 28v12M102 28v11M107 28v11M112 29v10" stroke="#7e0a10" stroke-width="1.300"/>
        <path d="M70 58c2-14 10-19 46-20v20z" fill="#8b8993"/><path d="M80 58c0-12 6-18 36-19" stroke="#f0bd34" stroke-width="3" fill="none"/><path d="M72 58c0-14 8-20 44-20" stroke="#36343c" stroke-width="2.500" fill="none"/>
        <path d="M36 46V22C37 10 44 6 56 6c13 0 19 6 21 18l-1 22q-3 5-8 6H42z" fill="#d9101a"/>
        <path d="M38 32c0-11 4-18 11-18v16q-5 3-11 2zM64 14c7 0 10 7 11 18q-6 1-11-2z" fill="#aaa8bd" stroke="#37101a"/>
        <path d="M51 22h10v18H51z" fill="#14080a"/><path d="M50 8h13v5H50z" fill="#3a0a0a"/><path d="M52 10.500h9" stroke="#f5a33a" stroke-width="2"/>
        <circle cx="43" cy="36" r="3" fill="#ffe9a8" stroke="#333"/><circle cx="68" cy="36" r="3" fill="#ffe9a8" stroke="#333"/>
        <path d="M38 46h36l-3 7H42z" fill="#473c42"/><path d="M44 53h25v5H44z" fill="#0c0c0e"/>
        <path d="M15 0v58" stroke="#000" stroke-width="4"/><ellipse cx="15" cy="5" rx="3.500" ry="4.500" fill="#000"/><path d="M6 17l4-6h10l4 6z" fill="#000"/><path d="M5 17h20l-5 14H10z" fill="#f1dfb0" stroke="#000" stroke-width="2"/><path d="M15 17v14M3 22h24" stroke="#000" stroke-width="1.500"/>
      </svg>
    </div>
    <div class="w-[75px] shrink-0 pr-[2px] flex justify-center"><svg class="w-[25px] h-[24px]"><use href="#tview"/></svg></div>
    <div class="w-[75px] shrink-0 flex justify-center"><svg class="w-[36px] h-[36px]" viewBox="0 0 36 36"><circle cx="18" cy="18" r="18" fill="url(#gEdge)"/><path d="M1 14C4-3 30-5 35 13c3 11-11 14-14 9 3-5 1-11-6-12C8 9 3 11 1 14z" fill="url(#gEdge2)"/><path d="M13 19c-3 8 4 15 12 14 4 0 8-3 8-6-6 3-14 1-14-5 0-2 2-3 2-5-3-3-7-1-8 2z" fill="#0c4a8d"/><path d="M20 20q-2 5 5 7 6 1 9-2l4 2v-6l-4-2q-4 4-10 3-3-1-2-4z" fill="#1f3443"/></svg></div>
    <div class="w-[75px] shrink-0 flex justify-center"><svg class="w-[33px] h-[33px]"><use href="#folder"/></svg></div>
    <div class="w-[75px] shrink-0 flex justify-center"><svg class="w-[36px] h-[34px]" viewBox="0 0 36 34"><path d="M0 11L18 0l18 11z" fill="#0a50a0"/><path d="M0 11h36v23H0z" fill="#27a3ea"/><path d="M3 11h30L18 24z" fill="#f6f6f6"/><path d="M36 11L18 24 7 34h29z" fill="#38c4f2"/></svg></div>
    <div class="w-[75px] shrink-0 flex justify-center"><svg class="w-[36px] h-[36px]" viewBox="0 0 36 36"><path d="M10 7V2h16v5" fill="none" stroke="#2aa8ea" stroke-width="2.500"/><path d="M0 5h36v27q0 4-4 4H4q-4 0-4-4z" fill="#f4f4f4"/><path d="M10 13h7v7h-7z" fill="#f25022"/><path d="M19 13h7v7h-7z" fill="#7fba00"/><path d="M10 22h7v7h-7z" fill="#00a4ef"/><path d="M19 22h7v7h-7z" fill="#ffb900"/></svg></div>
    <div class="w-[75px] shrink-0 flex justify-center text-[#ee7425]"><svg class="w-[37px] h-[37px]"><use href="#xampp"/></svg></div>
    <div class="w-[77px] shrink-0 h-full flex justify-center"><div class="w-[61px] h-full border-b-[3px] border-[#76b9ed] flex justify-center items-center"><svg class="w-[38px] h-[38px]" viewBox="0 0 38 38"><use href="#chrome" width="36" height="36"/><circle cx="27" cy="26" r="11.500" fill="#c7d4de"/><path d="M25 19l1 6-2 8h7l-1-7 1-6-3 3z" fill="#9a8b79"/><path d="M17 33q10 5 20 0l-6 5h-8z" fill="#58c8ba"/></svg></div></div>
    <div class="w-[73px] shrink-0 h-full bg-[#4c5a67] border-b-[3px] border-[#76b9ed] flex justify-center items-center"><svg class="w-[37px] h-[38px]" viewBox="0 0 37 38"><use href="#chrome" width="36" height="36"/><circle cx="27" cy="27" r="9.500" fill="#464b50"/><path d="M26 25c-5-2-8 1-7 4 3 6 12 5 12 0 0-3-3-3-5-4z" fill="#174f8d"/><path d="M23 20q7-3 9 3M20 34q8 3 14-3" stroke="#8a8f95" fill="none"/></svg></div>
    <div class="w-[77px] shrink-0 h-full flex justify-center"><div class="w-[61px] h-full border-b-[3px] border-[#76b9ed] flex justify-center items-center"><svg class="w-[36px] h-[36px]" viewBox="0 0 36 36"><rect width="36" height="36" rx="3" fill="#494949"/><path d="M27 6v7l-10 3 10 4v8L9 33v-7l10-4-10-4v-7z" fill="#ff9800" transform="translate(0 -1.500)"/></svg></div></div>
    <div class="w-[72px] shrink-0 h-full flex justify-center"><div class="w-[61px] h-full border-b-[3px] border-[#76b9ed] flex justify-center items-center"><svg class="w-[35px] h-[35px]"><use href="#dbt"/></svg></div></div>
    <div class="ml-auto flex items-center h-full">
      <svg class="w-[34px] h-[34px]" viewBox="0 0 34 34"><path d="M22 0A17.500 17.500 0 1 1 0 22C13 26 25 14 22 0z" fill="url(#gMoon)"/></svg>
      <span class="ml-[14px] w-[44px] text-[20px] tracking-[-0.5px] mt-[4px]">11°C</span>
      <svg class="ml-[31px] w-[19px] h-[11px]" viewBox="0 0 19 11"><path d="M1 10l8.500-9L18 10" stroke="#fff" fill="none" stroke-width="1.400"/></svg>
      <svg class="ml-[31px] w-[18px] h-[22px]" viewBox="0 0 18 22"><path d="M1 5.500h10v11H1zM11 9.500l5-3v9l-5-3M3 2q5-3 10 0M3 20q5 3 10 0" stroke="#fff" fill="none" stroke-width="1.300"/></svg>
      <svg class="ml-[25px] w-[25px] h-[18px]" viewBox="0 0 25 18"><path d="M8 4h14v12H7v-4M22 8h2v4h-2M2 0v4M6 0v4M0 4h8v4q-4 4-8 0zM4 9v6h3" stroke="#fff" fill="none" stroke-width="1.300"/><path d="M10 6h10v8H10z" fill="#fff"/></svg>
      <svg class="ml-[25px] w-[21px] h-[19px]" viewBox="0 0 21 19"><path d="M1 6h4l4-5v17l-4-5H1zM12.500 6l7 7M19.500 6l-7 7" stroke="#fff" fill="none" stroke-width="1.400"/></svg>
      <svg class="ml-[26px] w-[25px] h-[21px]"><use href="#net"/></svg>
      <div class="ml-[21px] w-[84px] text-center text-[17.500px] leading-[28px] tracking-[-0.4px] whitespace-nowrap -mt-px">10:45 PM<br>1/10/2023</div>
      <div class="ml-[28px] w-[54px] h-[42px] mt-[4px]"><svg class="w-[38px] h-[42px]" viewBox="0 0 38 42"><path d="M0 2h24v21h-9l-4 6v-6H0z" fill="#fff"/><path d="M5 8h14M5 12h14M5 16h14" stroke="#1b2642" stroke-width="1.400"/><circle cx="23.500" cy="25.500" r="12" fill="#33383d" stroke="#8c8f93"/><text x="23.500" y="31.500" font-size="16" font-weight="600" text-anchor="middle" fill="#fff" font-family="Open Sans">1</text></svg></div>
      <div class="w-[2px] h-full bg-[#5d6880] mr-[6px]"></div>
    </div>
  </div>
</div>

<script>
const el = id => document.getElementById(id);
const use = (id, cls) => `<svg class="${cls}"><use href="#${id}"/></svg>`;

// inner browser tabs
const tab = width => ([icon, text, color]) => `<div class="${width} h-full flex items-center pl-[6px]">` +
  (icon === 'spin' ? '<svg class="w-[14px] h-[14px]" viewBox="0 0 14 14"><path d="M2 5A6 6 0 0 1 12.500 5" stroke="#b9cdf3" stroke-width="1.500" fill="none"/></svg>'
    : `<span class="${color || ''}">${use(icon, 'w-[14px] h-[14px]')}</span>`) +
  `<span class="ml-[7px] w-[15px] overflow-hidden whitespace-nowrap">${text}</span><div class="w-px h-[20px] bg-[#9a9ea3] ml-auto"></div></div>`;
const orange = 'text-[#dd7634]', grey = 'text-[#a6a6a6]';
el('tabsL').innerHTML = '<div class="flex h-full shrink-0">' + [['pma','loca'],['pma','loca'],['pma','loca'],['pma','loca'],['xampp','List',orange],['globe','loca'],['spin','loca'],['xampp','inte',orange],['xampp','loca',grey],['xampp','loc',orange]].map(tab('w-[48.200px]')).join('') + '</div>';
el('tabsR').innerHTML = [['hse','Cav'],['xampp','10.',orange],['chromeg','Ne'],['xampp','loc',orange],['hse','Cav'],['chromeg','Ne']].map(tab('w-[47.300px]')).join('');

// sidebar menu
const item = ([icon, text, red, chev]) => `<div class="ml-[7px] mr-[3px] h-[32.700px] border-b border-[#676c6f] flex items-center pl-[14px] ${red ? 'text-[#8a1c23]' : 'text-[#303537]'}"><span class="${red ? 'text-[#8a1c23]' : 'text-[#16191a]'} -mt-[4px]">${use(icon, 'w-[17px] h-[15px]')}</span><span class="ml-[8px] whitespace-nowrap">${text}</span>${chev ? use('chl', 'w-[7px] h-[9px] ml-auto mr-[13px]') : ''}</div>`;
el('lims').innerHTML = [['dash','Dashboard'],['barcode','Scan Samples'],['file','Demographics'],['info','BT Sample Info'],['info','Micro.Sample Info'],['vial','Lists',1,1],['vial','Blood Transfusion',1,1],['vial','Blood Sciences',1,1],['vial','BioChemistry Lists',1,1],['vial','Haematology Lists',1,1],['vial','Coagulation Lists',1,1]].map(item).join('');
el('ocm').innerHTML = [['dash','Dashboard'],['bldg','Business Profile'],['user','My Profile']].map(item).join('');
el('tail').innerHTML = [['db','Requests',0,1],['vials','Test &amp; Profiles',0,1],['list','Lists',0,1]].map(item).join('');

// result table
const heads = ['','','','','','','','','',['70000984','07-01-','2023','19:00:25'],['70000963','07-01-','2023','19:00:17'],['70000961','07-01-','2023','19:00:08'],['70000956','07-01-','2023','11:00:13'],['70000940','06-01-','2023','19:02:10']];
el('thead').innerHTML = heads.map(h => `<div class="w-[89.650px] shrink-0">${h ? h.join('<br>') : ''}</div>`).join('');
const rows = [['NA-C',{12:'80'}],['K-C',{10:'6.5',12:'10.0'}],['CL-C',{12:'70'}],['UREA',{12:'12.0'}],['Creatinine.',{12:'13'}],['ASTL',{0:'66',11:'234'}],['TP',{0:'84',11:'45'}],['ALP',{0:'107',11:'35'}],['ALB',{0:'37',11:'56'}],['ALAT',{0:'51',11:'56'}],['GGT',{0:'44',11:'45'}],['CRP',{0:'4.9',1:'50',3:'10.0',4:'12.6',6:'99'}],['C-C',{0:'2.66'}]];
el('tbody').innerHTML = rows.map(([name, v], i) => `<div class="h-[34.730px] w-[1355px] flex items-center overflow-hidden border-b border-[#6b6d6d] pb-[2px] ${i % 2 ? 'bg-[#808080]' : 'bg-[#777878]'}"><div class="w-[166px] pl-[8px] shrink-0"><div class="w-[60px] h-[21px] rounded-[2px] bg-[#06285c] text-[#a3a9b3] text-[11.500px] leading-[20px] font-bold text-center tracking-[-0.6px] whitespace-nowrap">${name}</div></div>` +
  heads.map((_, c) => `<div class="w-[89.650px] shrink-0 text-center text-[16.800px] font-semibold text-[#17191a]">${v[c] || ''}</div>`).join('') + '</div>').join('');

// trend chart: smoothed line through the results
const X = i => 75.3 + i * 113.93, Y = v => 458.5 - v * 4.4;
const labels = ['70000940 2023-01-06 19:02','70000956 2023-01-07 11:13','70000984 2023-01-08 13:35','70000992 2023-01-08 17:24','70000995 2023-01-09 12:40','70001026 2023-01-09 18:39','70001035 2023-01-10 10:32','70001043 2023-01-10 12:35'];
const pts = [63,13,10,45,9,10,94,87].map((v, i) => [X(i), Y(v)]);
let s = '';
for (let v = 0; v <= 100; v += 10) s += `<path d="M65 ${Y(v)}H${X(7)}" stroke="${v ? '#ececec' : '#c6c6c6'}" stroke-width="1.500"/><text x="67" y="${Y(v) + 2.5}" text-anchor="end">${v}</text>`;
labels.forEach((t, i) => s += `<path d="M${X(i)} ${Y(100)}V469" stroke="${i ? '#e8e8e8' : '#cfcfcf'}" stroke-width="1.200"/><text x="${X(i)}" y="474" text-anchor="middle" textLength="107">${t}</text>`);
const ctl = pts.map((p, i) => {
  const a = pts[i - 1] || p, b = pts[i + 1] || p;
  const d1 = Math.hypot(p[0] - a[0], p[1] - a[1]), d2 = Math.hypot(b[0] - p[0], b[1] - p[1]);
  const f1 = .4 * d1 / (d1 + d2), f2 = .4 * d2 / (d1 + d2), dx = b[0] - a[0], dy = b[1] - a[1];
  return [p[0] - f1 * dx, p[1] - f1 * dy, p[0] + f2 * dx, p[1] + f2 * dy];
});
// control points stay inside the plot area
ctl.forEach(c => { c[1] = Math.max(Y(100), c[1]); c[3] = Math.max(Y(100), c[3]); });
let d = `M${pts[0]}`;
for (let i = 1; i < pts.length; i++) d += `C${ctl[i-1][2]} ${ctl[i-1][3]} ${ctl[i][0]} ${ctl[i][1]} ${pts[i]}`;
s += `<path d="${d}" fill="none" stroke="#e3e3e3" stroke-width="2.500"/>` + pts.map(p => `<circle cx="${p[0]}" cy="${p[1]}" r="8.500" fill="#69737b"/>`).join('');
el('chart').innerHTML = s;

// watermark
el('wm').innerHTML = [[406,201],[1217,201],[811,431],[406,661],[1217,661]].map(([x, y]) => `<text x="${x + .5}" y="${y + 8.5}" textLength="394" lengthAdjust="spacingAndGlyphs">!customs-wareshussai@healthirl.net</text><text x="${x + .5}" y="${y + 37.5}" textLength="198" lengthAdjust="spacingAndGlyphs">2023/01/10 10:05</text>`).join('');
</script>
</body>
</html>
